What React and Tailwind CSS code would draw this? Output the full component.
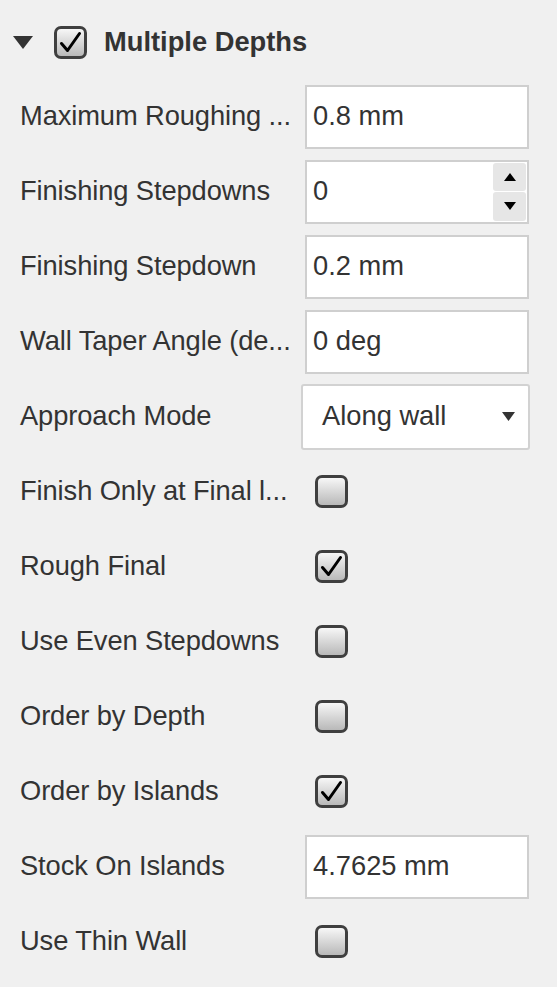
import React from 'react';

const font = { fontFamily: '"Liberation Sans", Arial, sans-serif' };

function CheckBox({ checked }) {
  return (
    <div className="w-[33px] h-[33px] rounded-[7px] border-[3px] border-[#3f3f3f] bg-gradient-to-b from-[#f7f7f7] to-[#b9b9b9] flex items-center justify-center">
      {checked && (
        <svg width="27" height="27" viewBox="0 0 27 27">
          <path d="M4.5 14.5 L10.5 21.5 L22.5 4.5" fill="none" stroke="#000" strokeWidth="3" strokeLinecap="round" strokeLinejoin="round" />
        </svg>
      )}
    </div>
  );
}

function TextBox({ value }) {
  return (
    <div className="w-[224px] h-[64px] border-2 border-[#cfcfcf] bg-white flex items-center pl-[6px]">
      {value}
    </div>
  );
}

function Spinner({ value }) {
  return (
    <div className="w-[224px] h-[64px] border-2 border-[#cfcfcf] bg-white flex items-center pl-[6px] pr-[1px]">
      <span className="flex-1">{value}</span>
      <div className="flex flex-col gap-[1px] w-[33px] h-[58px]">
        <div className="flex-1 bg-[#e6e6e6] rounded-[3px] flex items-center justify-center">
          <svg width="12" height="8" viewBox="0 0 12 8"><path d="M0 8 L6 0 L12 8 Z" fill="#000" /></svg>
        </div>
        <div className="flex-1 bg-[#e6e6e6] rounded-[3px] flex items-center justify-center">
          <svg width="12" height="8" viewBox="0 0 12 8"><path d="M0 0 L6 8 L12 0 Z" fill="#000" /></svg>
        </div>
      </div>
    </div>
  );
}

function Dropdown({ value }) {
  return (
    <div className="-ml-[4px] w-[229px] h-[66px] border-2 border-[#d2d2d2] rounded-[3px] bg-white flex items-center pl-[19px] pr-[13px]">
      <span className="flex-1">{value}</span>
      <svg width="13" height="9" viewBox="0 0 13 9"><path d="M0 0 L6.5 9 L13 0 Z" fill="#333" /></svg>
    </div>
  );
}

const rows = [
  { label: 'Maximum Roughing ...', type: 'text', value: '0.8 mm' },
  { label: 'Finishing Stepdowns', type: 'spin', value: '0' },
  { label: 'Finishing Stepdown', type: 'text', value: '0.2 mm' },
  { label: 'Wall Taper Angle (de...', type: 'text', value: '0 deg' },
  { label: 'Approach Mode', type: 'drop', value: 'Along wall' },
  { label: 'Finish Only at Final l...', type: 'check', value: false },
  { label: 'Rough Final', type: 'check', value: true },
  { label: 'Use Even Stepdowns', type: 'check', value: false },
  { label: 'Order by Depth', type: 'check', value: false },
  { label: 'Order by Islands', type: 'check', value: true },
  { label: 'Stock On Islands', type: 'text', value: '4.7625 mm' },
  { label: 'Use Thin Wall', type: 'check', value: false },
];

export default function App() {
  return (
    <div className="w-[557px] h-[987px] bg-[#f0f0f0] text-[#333] text-[27.3px] leading-[1.2] overflow-hidden" style={font}>
      <div className="h-[79px] pt-[5px] flex items-center">
        <svg className="ml-[13px]" width="20" height="13" viewBox="0 0 20 13"><path d="M0 0 L10 13 L20 0 Z" fill="#333" /></svg>
        <div className="ml-[21px]">
          <CheckBox checked />
        </div>
        <span className="ml-[17px] font-bold">Multiple Depths</span>
      </div>
      {rows.map((row) => (
        <div key={row.label} className="h-[75px] flex items-center">
          <div className="w-[305px] pl-[20px] whitespace-nowrap tracking-[-0.1px]">{row.label}</div>
          {row.type === 'text' && <TextBox value={row.value} />}
          {row.type === 'spin' && <Spinner value={row.value} />}
          {row.type === 'drop' && <Dropdown value={row.value} />}
          {row.type === 'check' && (
            <div className="ml-[10px]">
              <CheckBox checked={row.value} />
            </div>
          )}
        </div>
      ))}
    </div>
  );
}
